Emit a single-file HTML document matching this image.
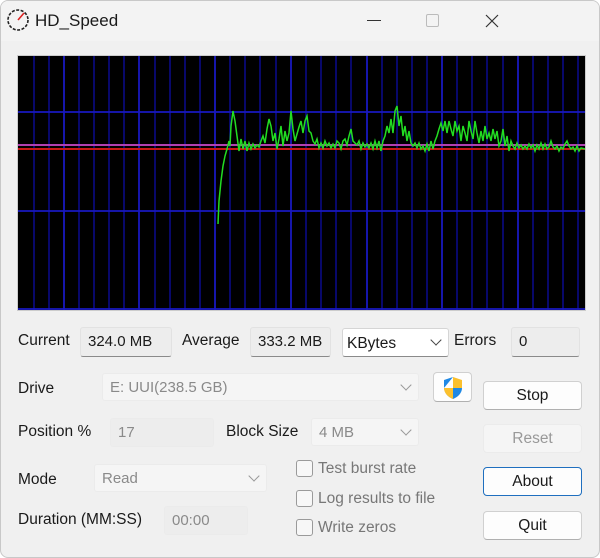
<!DOCTYPE html>
<html><head><meta charset="utf-8"><style>
*{box-sizing:border-box;margin:0;padding:0}
body{width:600px;height:558px;background:#fff;font-family:"Liberation Sans",sans-serif;font-size:15px;color:#1a1a1a;position:relative;overflow:hidden}
.win{position:absolute;left:0;top:0;width:600px;height:558px;background:#f0f0f0;border:1px solid #c8c8c8;border-radius:8px;overflow:hidden}
.title{position:absolute;left:0;top:0;width:600px;height:40px;background:#f3f3f3}
.a{position:absolute}
.lbl{position:absolute;font-size:15.5px;color:#1a1a1a}
.box{position:absolute;background:#ededed;border:1px solid #e2e2e2;border-bottom:1px solid #8a8a8a;border-radius:3px;padding:5px 0 0 7px;font-size:15px}
.dis{position:absolute;background:#f5f5f5;border:1px solid #ebebeb;border-radius:3px;color:#8a8a8a;padding:5px 0 0 7px;font-size:15px}
.chev{position:absolute;right:8px;top:7px;width:8px;height:8px;border-right:1px solid #999;border-bottom:1px solid #999;transform:rotate(45deg)}
.btn{position:absolute;background:#fdfdfd;border:1px solid #d0d0d0;border-bottom-color:#b0b0b0;border-radius:4px;text-align:center;font-size:15.5px;padding-top:5px}
.cb{position:absolute;width:17px;height:17px;border:1px solid #9a9a9a;border-radius:3px;background:#f7f7f7}
.cl{position:absolute;color:#777;font-size:15.5px}
</style></head><body>
<div class="win">
<div class="title">
<svg class="a" style="left:5px;top:7px" width="24" height="24" viewBox="0 0 24 24"><circle cx="12" cy="12" r="10" fill="none" stroke="#222" stroke-width="1.6" stroke-dasharray="3 1.5"/><line x1="12" y1="12" x2="18" y2="5" stroke="#d22" stroke-width="1.6"/></svg>
<div class="a" style="left:34px;top:10px;font-size:17px">HD_Speed</div>
<div class="a" style="left:366px;top:19px;width:14px;height:1px;background:#333"></div>
<div class="a" style="left:425px;top:13px;width:13px;height:13px;border:1px solid #bbb;border-radius:2px"></div>
<svg class="a" style="left:484px;top:13px" width="14" height="14"><path d="M1 1L13 13M13 1L1 13" stroke="#333" stroke-width="1.2"/></svg>
</div>
<svg class="a" style="left:16px;top:54px;background:#000" width="569" height="256" viewBox="16 54 569 256">
<rect x="16.5" y="54.5" width="568" height="255" fill="#000" stroke="#ccc"/>
<g stroke="#0c0c98" stroke-width="1.4">
<line x1="33" y1="55" x2="33" y2="309"/><line x1="48" y1="55" x2="48" y2="309"/><line x1="78" y1="55" x2="78" y2="309"/><line x1="93" y1="55" x2="93" y2="309"/><line x1="108" y1="55" x2="108" y2="309"/><line x1="123" y1="55" x2="123" y2="309"/><line x1="154" y1="55" x2="154" y2="309"/><line x1="169" y1="55" x2="169" y2="309"/><line x1="184" y1="55" x2="184" y2="309"/><line x1="199" y1="55" x2="199" y2="309"/><line x1="229" y1="55" x2="229" y2="309"/><line x1="244" y1="55" x2="244" y2="309"/><line x1="259" y1="55" x2="259" y2="309"/><line x1="275" y1="55" x2="275" y2="309"/><line x1="305" y1="55" x2="305" y2="309"/><line x1="320" y1="55" x2="320" y2="309"/><line x1="335" y1="55" x2="335" y2="309"/><line x1="350" y1="55" x2="350" y2="309"/><line x1="381" y1="55" x2="381" y2="309"/><line x1="396" y1="55" x2="396" y2="309"/><line x1="411" y1="55" x2="411" y2="309"/><line x1="426" y1="55" x2="426" y2="309"/><line x1="456" y1="55" x2="456" y2="309"/><line x1="471" y1="55" x2="471" y2="309"/><line x1="486" y1="55" x2="486" y2="309"/><line x1="502" y1="55" x2="502" y2="309"/><line x1="532" y1="55" x2="532" y2="309"/><line x1="547" y1="55" x2="547" y2="309"/><line x1="562" y1="55" x2="562" y2="309"/><line x1="577" y1="55" x2="577" y2="309"/>
</g>
<g stroke="#1818c0" stroke-width="1.8">
<line x1="63" y1="55" x2="63" y2="309"/><line x1="138" y1="55" x2="138" y2="309"/><line x1="214" y1="55" x2="214" y2="309"/><line x1="290" y1="55" x2="290" y2="309"/><line x1="366" y1="55" x2="366" y2="309"/><line x1="441" y1="55" x2="441" y2="309"/><line x1="517" y1="55" x2="517" y2="309"/>
<line x1="17" y1="111" x2="584" y2="111"/><line x1="17" y1="210" x2="584" y2="210"/><line x1="17" y1="308" x2="584" y2="308"/>
</g>
<line x1="17" y1="144" x2="584" y2="144" stroke="#b040b0" stroke-width="2"/>
<line x1="17" y1="148" x2="584" y2="148" stroke="#c81818" stroke-width="2"/>
<polyline fill="none" stroke="#22dd22" stroke-width="1.5" points="217,223 218,200 220,180 222,165 224,155 226,148 228,140 229,145 230,125 232,110 234,120 236,135 238,150 240,138 242,148 244,140 246,150 248,142 250,148 252,143 254,147 256,144 258,146 260,140 262,135 264,142 266,128 268,118 270,125 272,140 274,132 276,148 278,138 280,125 282,145 284,130 286,140 288,132 290,110 292,128 294,140 296,133 298,126 300,120 302,132 304,120 306,115 308,130 310,132 312,140 314,143 316,138 318,147 320,142 322,147 324,140 326,145 328,142 330,147 332,143 334,147 336,140 338,142 340,148 342,140 344,138 346,144 348,135 350,128 352,140 354,142 356,144 358,140 360,148 362,142 364,146 366,143 368,147 370,142 372,148 374,140 376,147 378,140 380,150 382,140 384,135 386,125 388,132 390,118 392,132 394,110 396,105 398,125 400,115 402,135 404,125 406,140 408,130 410,142 412,145 414,142 416,147 418,142 420,148 422,145 424,150 426,143 428,150 430,140 432,148 434,140 436,135 438,128 440,122 442,130 444,120 446,132 448,120 450,128 452,135 454,120 456,130 458,125 460,140 462,125 464,132 466,140 468,120 470,130 472,138 474,120 476,132 478,142 480,130 482,140 484,125 486,138 488,132 490,140 492,128 494,138 496,130 498,145 500,140 502,128 504,145 506,135 508,150 510,140 512,145 514,148 516,142 518,147 520,144 522,148 524,145 526,148 528,143 530,147 532,144 534,150 536,144 538,148 540,142 542,148 544,143 546,148 548,146 550,140 552,146 554,148 556,145 558,150 560,146 562,148 564,143 566,140 568,145 570,148 572,146 574,150 576,145 578,150 580,147 584,148"/>
</svg>

<div class="lbl" style="left:17px;top:331px">Current</div>
<div class="box" style="left:79px;top:326px;width:92px;height:30px">324.0 MB</div>
<div class="lbl" style="left:181px;top:331px">Average</div>
<div class="box" style="left:249px;top:326px;width:81px;height:30px">333.2 MB</div>
<div class="a" style="left:341px;top:327px;width:107px;height:29px;background:#fff;border:1px solid #d5d5d5;border-bottom-color:#8a8a8a;border-radius:3px;padding:6px 0 0 4px;font-size:15.5px">KBytes<div class="chev" style="border-color:#444"></div></div>
<div class="lbl" style="left:453px;top:331px">Errors</div>
<div class="box" style="left:510px;top:326px;width:69px;height:30px">0</div>

<div class="lbl" style="left:17px;top:379px">Drive</div>
<div class="dis" style="left:101px;top:372px;width:317px;height:28px">E: UUI(238.5 GB)<div class="chev"></div></div>
<div class="btn" style="left:432px;top:371px;width:39px;height:30px;padding:0">
<svg width="22" height="24" viewBox="0 0 22 24" style="margin-top:3px"><path d="M11 1L2 4v7c0 6 4 10 9 12V12H2" fill="#1e88e5"/><path d="M11 1l9 3v8h-9z" fill="#fbc02d"/><path d="M2 12h9v11C6 21 2 17 2 12z" fill="#fbc02d"/><path d="M11 12h9c0 5-4 9-9 11z" fill="#1e88e5"/></svg></div>
<div class="btn" style="left:482px;top:380px;width:99px;height:29px">Stop</div>

<div class="lbl" style="left:17px;top:422px">Position %</div>
<div class="dis" style="left:109px;top:417px;width:104px;height:29px;background:#ededed">17</div>
<div class="lbl" style="left:225px;top:422px">Block Size</div>
<div class="dis" style="left:310px;top:417px;width:108px;height:28px">4 MB<div class="chev"></div></div>
<div class="btn" style="left:482px;top:423px;width:99px;height:29px;background:#f5f5f5;border-color:#ebebeb;color:#999">Reset</div>

<div class="lbl" style="left:17px;top:470px">Mode</div>
<div class="dis" style="left:93px;top:463px;width:173px;height:28px">Read<div class="chev"></div></div>
<div class="cb" style="left:295px;top:459px"></div><div class="cl" style="left:317px;top:459px">Test burst rate</div>
<div class="cb" style="left:295px;top:489px"></div><div class="cl" style="left:317px;top:489px">Log results to file</div>
<div class="cb" style="left:295px;top:518px"></div><div class="cl" style="left:317px;top:518px">Write zeros</div>
<div class="btn" style="left:482px;top:466px;width:99px;height:29px;border:1.5px solid #1f6fbf">About</div>

<div class="lbl" style="left:17px;top:510px">Duration (MM:SS)</div>
<div class="dis" style="left:163px;top:505px;width:84px;height:29px;background:#ededed">00:00</div>
<div class="btn" style="left:482px;top:510px;width:99px;height:29px">Quit</div>
</div>
</body></html>
